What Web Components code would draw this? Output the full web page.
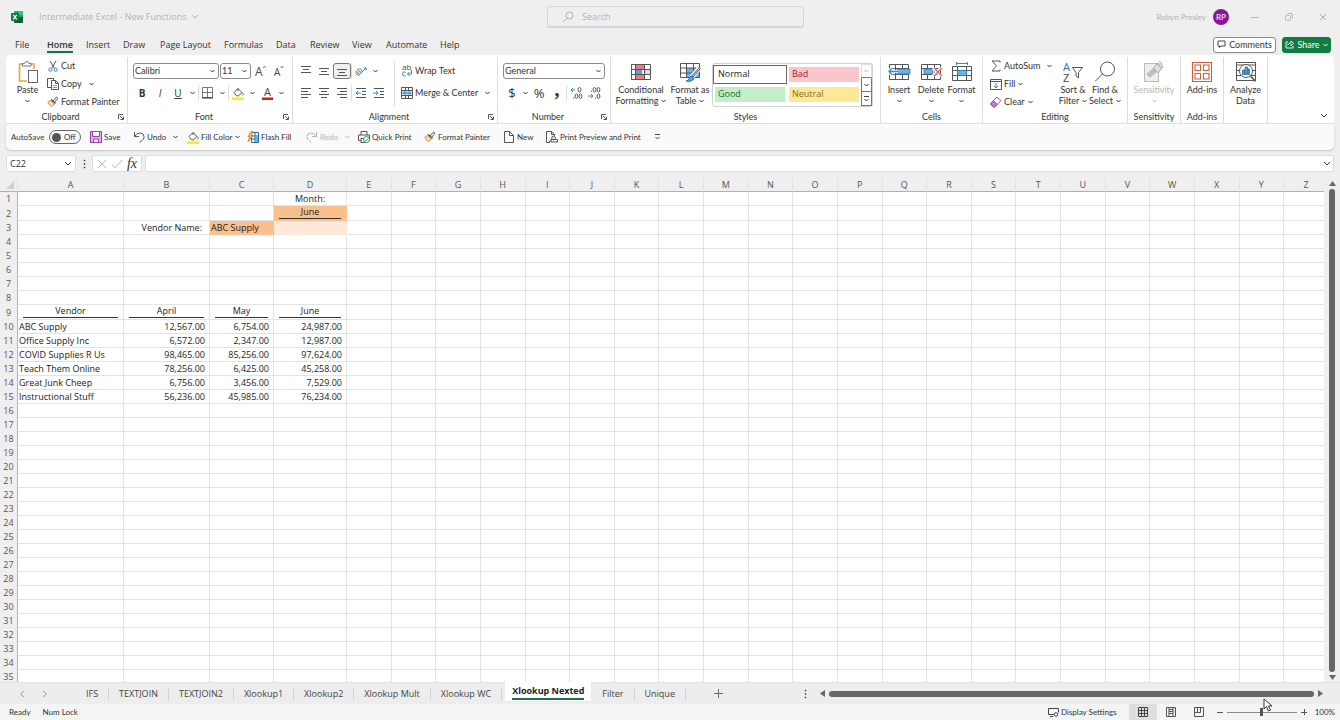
<!DOCTYPE html>
<html lang="en">
<head>
<meta charset="utf-8">
<title>Intermediate Excel - New Functions</title>
<style>
html,body{margin:0;height:100%}
body{font:9px/12px "Open Sans","Noto Sans",sans-serif;color:#333;background:#efefef;overflow:hidden;--compact:Lato,"Open Sans",sans-serif}
</style>
</head>
<body>
<xl-app></xl-app>
<script>
const base = `*{box-sizing:border-box}button,input,select{font:inherit;color:inherit;margin:0}button{background:none;border:0;padding:0}a{color:inherit;text-decoration:none}`;

function define(name, css, html) {
  const template = document.createElement('template');
  customElements.define(name, class extends HTMLElement {
    connectedCallback() {
      if (this.shadowRoot) return;
      const body = typeof html === 'function' ? html(this) : html;
      template.innerHTML = `<style>${base}${css}</style>${body}`;
      this.attachShadow({mode: 'open'}).append(template.content.cloneNode(true));
    }
  });
}

/* ---------- icons: [width, height, drawing] ---------- */
const g = '#555', b = '#2e8bc9';
const lines = (ys, xs) => `<path stroke="${g}" d="${ys.map((y, i) => `M${xs[i][0]} ${y}H${xs[i][1]}`).join('')}"/>`;
const painter = `<path d="M6 5l3.500-4 1.500 1.300-3.300 3.900" stroke="${g}" fill="#fff"/><path d="M4 3.500l4.500 4" stroke="${g}" stroke-width="1.600"/><path d="M3.500 4.500L.8 6.200 4 10.500l3.500-2.500z" fill="#fbe3bd" stroke="#e08a24"/>`;
const bucket = `<path d="M2 5.500L6 1.500l4 4-3.500 3.300H4.500zM6 1.500V4" stroke="${g}" fill="#fff"/><path d="M10.500 5.500q1.500 2 0 3" stroke="${b}"/><path d="M0 10.500h12v2.500H0z" fill="#fbf000"/>`;
const icons = {
  excel: [12,12,`<rect x="3" y="0" width="9" height="12" rx="1" fill="#21a366"/><path d="M7 0h4q1 0 1 1v3H7z" fill="#33c481"/><path d="M3 6h9v5q0 1-1 1H4q-1 0-1-1z" fill="#185c37"/><rect x="0" y="2" width="8" height="8" rx="1" fill="#107c41"/><path d="M2.300 3.800l3.400 4.500M5.700 3.800L2.300 8.300" stroke="#fff" stroke-width="1.200"/>`],
  caret: [5,4,`<path d="M.5 1l2 2 2-2" stroke="currentColor"/>`],
  chevron: [8,6,`<path d="M1 1l3 3 3-3" stroke="currentColor"/>`],
  left: [6,8,`<path d="M5 1L1.500 4 5 7" stroke="currentColor"/>`],
  right: [6,8,`<path d="M1 1l3.500 3L1 7" stroke="currentColor"/>`],
  search: [12,12,`<circle cx="7.500" cy="4.500" r="3.500" stroke="#b0b0b0"/><path d="M5 7L1 11" stroke="#b0b0b0"/>`],
  min: [8,8,`<path d="M0 4.500h8" stroke="#bbb"/>`],
  restore: [8,8,`<rect x=".5" y="2.500" width="5" height="5" rx="1" stroke="#bbb"/><path d="M2.500 1q0-.5.500-.5h3q1.500 0 1.500 1.500v3.500" stroke="#bbb"/>`],
  close: [8,8,`<path d="M1 1l6 6M7 1L1 7" stroke="#aaa"/>`],
  comment: [9,9,`<path d="M1 1h7v5H4L2.500 7.500V6H1z" stroke="#444"/>`],
  share: [9,9,`<path d="M3 2H1v6h7V6M2.500 5.500Q3 3 6 3V1l2.500 2.500L6 6V4.500" stroke="#fff" stroke-width=".9"/>`],
  paste: [20,22,`<path d="M4 3H1.500v17H9M13 3h3v5" stroke="#eaa63c" stroke-width="1.600"/><path d="M4.500 5V2.500h2Q7 .5 8.800.5t2.200 2h2V5z" fill="#fff" stroke="#777"/><rect x="10.500" y="9.500" width="9" height="12" fill="#fff" stroke="#666"/>`],
  cut: [10,12,`<path d="M2 1l4.500 7.500M8 1L3.500 8.500" stroke="#555"/><circle cx="2.400" cy="9.700" r="1.600" stroke="${b}"/><circle cx="7.600" cy="9.700" r="1.600" stroke="${b}"/>`],
  copy: [12,12,`<path d="M4 9.500H.5v-9h6V2M4.500 2.500h4l3 3v6h-7zM8.500 2.500v3h3" stroke="#555"/><path d="M6 7.500h4M6 9.500h4" stroke="#777" stroke-width=".8"/>`],
  painter: [12,12,painter],
  launcher: [6,6,`<path d="M.5 5V.5H5M2 2l3 3M5.500 2.500v3h-3" stroke="#555"/>`],
  grow: [11,12,`<path d="M8 3l1.500-2L11 3" stroke="${b}" stroke-width=".9"/><text x="0" y="11" font-size="12" fill="#444">A</text>`],
  shrink: [11,12,`<path d="M7.500 1L9 3l1.500-2" stroke="${b}" stroke-width=".9"/><text x="1" y="11" font-size="10" fill="#444">A</text>`],
  borders: [12,12,`<path d="M.5.5h10v10H.5zM5.500.5v10M.5 5.500h10" stroke="#777"/><path d="M0 11h11" stroke="#333"/>`],
  bucket: [13,13,bucket],
  fontcolor: [11,13,`<text x="2" y="9" font-size="11" fill="#444">A</text><path d="M0 10.500h11v2.500H0z" fill="#e5121a"/>`],
  atop: [12,12,lines([1.5,4.5,7.5],[[1,11],[3,9],[1,11]])],
  amid: [12,12,lines([3.5,6.500,9.5],[[1,11],[3,9],[1,11]])],
  abot: [12,12,lines([4.5,7.5,10.5],[[1,11],[3,9],[1,11]])],
  aleft: [12,12,lines([1.5,4.5,7.5,10.5],[[1,11],[1,8],[1,11],[1,8]])],
  acen: [12,12,lines([1.5,4.5,7.5,10.5],[[1,11],[3,9],[1,11],[3,9]])],
  aright: [12,12,lines([1.5,4.5,7.5,10.5],[[1,11],[4,11],[1,11],[4,11]])],
  orient: [12,12,`<path d="M3 11l8-8M8.500 3H11v2.500" stroke="${b}"/><text x="-1" y="8" font-size="7" transform="rotate(-40 4 6)" fill="#444">ab</text>`],
  outdent: [12,12,lines([1.5,4.5,7.5,10.5],[[1,11],[7,11],[7,11],[1,11]])+`<path d="M6 6H1M3 4L1 6l2 2" stroke="${b}"/>`],
  indent: [12,12,lines([1.5,4.5,7.5,10.5],[[1,11],[7,11],[7,11],[1,11]])+`<path d="M0 6h5M3 4l2 2-2 2" stroke="${b}"/>`],
  wrap: [12,12,`<text x="1" y="5" font-size="8" fill="#444">ab</text><path d="M5 7.500Q4.500 7 3.500 7 1.500 7 1.500 9t2 2q1 0 1.500-.5" stroke="${b}"/><path d="M10.500 5v4H6.500M8.500 7l-2 2 2 2" stroke="${b}"/>`],
  merge: [12,12,`<rect x="1" y="3" width="10" height="6" fill="#bcdff5"/><path d="M.5.5h11v11H.5zM.5 3.500h11M.5 8.500h11M4.500.5v3M7.500.5v3M4.500 8.500v3M7.500 8.500v3" stroke="#555"/><path d="M2 6h8M4 4.500L2.500 6 4 7.500M8 4.500L9.500 6 8 7.500" stroke="#1c7cc0"/>`],
  decinc: [13,12,`<path d="M5 3H1M3 1L1 3l2 2" stroke="${b}"/><ellipse cx="9.500" cy="2.800" rx="1.500" ry="2.300" stroke="#555"/><ellipse cx="6.500" cy="9.200" rx="1.400" ry="2.300" stroke="#555"/><ellipse cx="10.500" cy="9.200" rx="1.400" ry="2.300" stroke="#555"/><path d="M3 11h1" stroke="#555"/>`],
  decdec: [13,12,`<path d="M0 9h5M3 7l2 2-2 2" stroke="${b}"/><ellipse cx="6.500" cy="2.800" rx="1.400" ry="2.300" stroke="#555"/><ellipse cx="10.500" cy="2.800" rx="1.400" ry="2.300" stroke="#555"/><ellipse cx="10.500" cy="9.200" rx="1.400" ry="2.300" stroke="#555"/><path d="M3 4.500h1M7 11h1" stroke="#555"/>`],
  cond: [20,18,`<rect x=".5" y="1.500" width="19" height="15" fill="#fff"/><path d="M4 2h9v4H4zM4 11h10v5H4z" fill="#f4777f"/><path d="M4 6h7v5H4z" fill="#4ea6dc"/><path d="M14 6h5v5h-5z" fill="#ddd"/><path d="M.5 1.500h19v15H.5zM4.500 1.500v15M13.500 1.500v15M.5 6.500h19M.5 11.500h19" stroke="#555"/>`],
  fmttable: [21,20,`<path d="M6 6h14v10H6z" fill="#69b4e5"/><path d="M.5 1.500h19v14H.5zM6.500 1.500v14M13.500 1.500v14M.5 6h19M.5 11h19" stroke="#555"/><path d="M19.500 6L11 16" stroke="#fff" stroke-width="5"/><path d="M20 6l-8 9" stroke="#555" stroke-width="2.400"/><path d="M20 6l-8 9" stroke="#fff" stroke-width=".8"/><path d="M12 14q-3 0-3 3-.5 1.500-3 2 5 1.500 8-2z" fill="#4ea6dc" stroke="#2576ad"/>`],
  insert: [22,18,`<path d="M1.500 1.500h19v15h-19zM1.500 5.500h19M1.500 11.500h19M7.500 1.500v15M14.500 1.500v15" stroke="#555"/><path d="M9 6h13v5H9z" fill="#69b4e5" stroke="#2e7cb5" stroke-width=".8"/><path d="M10 8.500H.5M4.500 4.500l-4 4 4 4" stroke="#fff" stroke-width="3"/><path d="M10 8.500H1M4.500 5L1 8.500 4.500 12" stroke="${b}" stroke-width="1.300"/>`],
  delete: [22,18,`<path d="M1.500 1.500h19v15h-19zM1.500 5.500h19M1.500 11.500h19M7.500 1.500v15M14.500 1.500v15" stroke="#555"/><path d="M4 6h9v5H4z" fill="#69b4e5" stroke="#2e7cb5" stroke-width=".8"/><path d="M13 5l8 8M21 5l-8 8" stroke="#fff" stroke-width="3"/><path d="M14 5l8 8M22 5l-8 8" stroke="#e05a63" stroke-width="1.200"/>`],
  format: [22,20,`<path d="M5.500 0v3M16.500 0v3M5.500 1.500h11" stroke="${b}"/><path d="M1.500 4.500h19v14h-19zM1.500 8.500h19M1.500 13.500h19M6.500 4.500v14M15.500 4.500v14" stroke="#555"/><path d="M6.500 8.500h9v5h-9z" fill="#69b4e5" stroke="#2e7cb5"/>`],
  sum: [10,12,`<path d="M9 2.500V1H1l4.500 4.800L1 11h8V9.500" stroke="#555"/>`],
  fill: [12,11,`<path d="M.5.5h11v10H.5zM.5 2.500h11" stroke="#555"/><path d="M6 4v5M4 7l2 2 2-2" stroke="${b}"/>`],
  clear: [12,12,`<path d="M1 7l6-6 4 3.500-6 6.500H3.500L1 8.500z" stroke="#a14fb3" fill="#fff"/><path d="M1 7l2.500-2.500L7.500 8.500 5 11H3.500L1 8.500z" fill="#c07fd0" stroke="#a14fb3"/>`],
  sort: [20,22,`<text x="0" y="10" font-size="11" fill="#2378b5">A</text><text x="0" y="21" font-size="11" fill="#444">Z</text><path d="M9.500 6.500h10l-4 5V17l-2.500-2v-3.500z" stroke="#555"/>`],
  find: [22,22,`<circle cx="13.500" cy="8" r="7" stroke="#555"/><path d="M8.500 13L1 20.500" stroke="#555"/>`],
  sens: [20,22,`<rect x=".5" y="2.500" width="14" height="18" fill="#eee" stroke="#bbb"/><path d="M3 13l6-5 3 3-6 5z" fill="#ccc" stroke="#aaa"/><path d="M9 7l5-5 5 4-5 6z" fill="#ddd" stroke="#aaa"/><path d="M12 2l6 6M15 0l4 4M5 14l5-4" stroke="#aaa"/>`],
  addins: [20,20,`<path d="M.5.5h19v19H.5zM3 3h5.500v5.500H3zM11.500 3H17v5.500h-5.500zM3 11.500h5.500V17H3zM11.500 11.500H17V17h-5.500z" stroke="#c5603c" stroke-width="1.100"/>`],
  analyze: [20,20,`<path d="M.5.5h19v18H.5zM.5 3h19M.5 8.500h19M.5 13.500h19" stroke="#555"/><circle cx="10" cy="9" r="6.500" fill="#fff" stroke="#555"/><path d="M6.500 8h2v4.500h-2zM9 5h2.500v7.500H9zM12 7h1.500v5.500H12z" fill="#4ea6dc" stroke="#225d88" stroke-width=".7"/><path d="M14.500 14l5 5.500" stroke="#555" stroke-width="1.500"/>`],
  save: [12,12,`<path d="M.5.5h11v11h-11z" fill="#e3b5e8" stroke="#9b3fa8"/><path d="M2.500.5h7v5h-7zM3.500 8h5v3.500h-5z" fill="#fff" stroke="#9b3fa8"/>`],
  undo: [12,12,`<path d="M1.500 1v4.500H6M1.500 5.500Q4 1.500 7.500 2T11 5.500 9.500 9L6.500 11.500" stroke="#555"/>`],
  redo: [12,12,`<path d="M10.500 1v4.500H6M10.500 5.500Q8 1.500 4.500 2T1 5.500 2.500 9L5.500 11.500" stroke="#b5b5b5"/>`],
  flash: [12,12,`<path d="M4.500 1.500h7v10h-7zM8 1.500v10M4.500 5h7M4.500 8h7" stroke="#1c6ca5"/><path d="M8.500 5.500h2.500V11H8.500z" fill="#69b4e5"/><path d="M4 .5L1 5.500h2L.8 11 6 4.500H4L6 .5z" fill="#f7c46c" stroke="#d17718" stroke-width=".8"/>`],
  quick: [12,12,`<path d="M3 4V.5h6V4M3 9.500H.5V4h11v5.500H9M3 7.500h5.500v4H3z" stroke="#555"/><circle cx="8.500" cy="8.500" r="3" fill="#fff" stroke="#2d9a54"/><path d="M7 8.500l1.200 1.200L10 7.500" stroke="#2d9a54"/>`],
  page: [10,12,`<path d="M.5.5h5l4 4v7h-9zM5.500.5v4h4" stroke="#555"/>`],
  preview: [12,12,`<path d="M4 11.500H.5V.5h5l3 3V5M5.500.5v3h3" stroke="#555"/><circle cx="7.500" cy="7" r="1.800" stroke="#555"/><path d="M5 8.500h6.500V11H5zM3 11l2-2" stroke="#555"/>`],
  more: [7,6,`<path d="M1 .5h5M1.500 3l2 2 2-2" stroke="#444"/>`],
  dots: [3,10,`<path d="M1 1h1v1H1zM1 4.500h1v1H1zM1 8h1v1H1z" fill="#444" stroke="#444" stroke-width=".6"/>`],
  cancel: [10,10,`<path d="M1 1l8 8M9 1L1 9" stroke="#bbb"/>`],
  check: [12,10,`<path d="M1 5.500L4 9l7-8" stroke="#bbb"/>`],
  plus: [9,9,`<path d="M4.500 0v9M0 4.500h9" stroke="#666"/>`],
  display: [11,9,`<path d="M6 6.500H.5v-6h10v4M2 8.500h3" stroke="#444"/><circle cx="8" cy="6.500" r="1.800" stroke="#444"/>`],
  normal: [10,10,`<path d="M.5.5h9v9h-9zM3.500.5v9M6.500.5v9M.5 3.500h9M.5 6.500h9" stroke="#444"/>`],
  layout: [10,10,`<path d="M.5.5h9v9h-9zM3 .5v9M7 .5v9M3 2.500h4M3 4.500h4M3 6.500h4" stroke="#555"/>`],
  breaks: [10,10,`<path d="M.5.5h9v9h-9zM3.500.5v5h3v-5M.5 5.500h3" stroke="#555"/>`],
  minus: [6,6,`<path d="M0 3.500h6" stroke="#555"/>`],
  plussm: [6,6,`<path d="M0 3.500h6M3.500 0v6" stroke="#555"/>`],
  triup: [7,5,`<path d="M0 5L3.500 0 7 5z" fill="#666"/>`],
  tridown: [7,5,`<path d="M0 0h7L3.500 5z" fill="#666"/>`],
  trileft: [5,7,`<path d="M5 0v7L0 3.500z" fill="#666"/>`],
  triright: [5,7,`<path d="M0 0v7l5-3.500z" fill="#666"/>`],
  pointer: [10,14,`<path d="M1 1v10l2.500-2.500L5.500 13l2-1L5.500 8H9z" fill="#fff" stroke="#333"/>`]
};
define('xl-icon', `:host{display:block;flex:none;line-height:0}svg{display:block;overflow:visible;font-family:"Open Sans",sans-serif}`,
  el => { const [w,h,d] = icons[el.getAttribute('name')]; return `<svg width="${w}" height="${h}" viewBox="0 0 ${w} ${h}" fill="none" aria-hidden="true">${d}</svg>`; });

/* small command: icon, text and optional drop-down arrow in one line */
define('xl-command', `:host{display:block}button{display:flex;align-items:center;height:16px;gap:2px;white-space:nowrap}
  .pic{width:12px;display:flex;justify-content:center}.arrow{margin-left:var(--caret-gap,1px)}`,
  el => `<button type="button"><span class="pic"><xl-icon name="${el.getAttribute('icon')}"></xl-icon></span><slot></slot>${el.hasAttribute('caret') ? '<xl-icon class="arrow" name="caret"></xl-icon>' : ''}</button>`);

/* tall command: picture above one or two lines of text */
define('xl-tall', `:host{display:block;line-height:11px;width:var(--w,31px);flex:none}
  button{width:100%;display:flex;flex-direction:column;align-items:center;white-space:nowrap;padding-top:2px}
  .pic{height:25px;display:flex;align-items:center}.second{display:flex;align-items:center;gap:3px;height:11px}`,
  el => `<button type="button"><span class="pic"><xl-icon name="${el.getAttribute('icon')}"></xl-icon></span><slot></slot><span class="second">${el.getAttribute('second') || ''}${el.hasAttribute('caret') ? '<xl-icon name="caret"></xl-icon>' : ''}</span></button>`);

/* icon-only tool */
define('xl-tool', `:host{display:block;width:var(--w,18px);flex:none}button{width:100%;height:16px;display:flex;align-items:center;justify-content:center;font-size:10px}
  :host([on]) button{border:1px solid #777;border-radius:3px;background:#f0f0f0}`,
  el => `<button type="button" aria-label="${el.title}">${el.getAttribute('icon') ? `<xl-icon name="${el.getAttribute('icon')}"></xl-icon>` : '<slot></slot>'}</button>`);

define('xl-select', `:host{display:flex;position:relative;width:var(--w)}select{appearance:none;width:100%;height:16px;border:1px solid #8a8a8a;border-radius:3px;background:#fff;padding:0 0 0 1px;outline:0}
  xl-icon{position:absolute;right:4px;top:6px;pointer-events:none}`,
  el => `<select aria-label="${el.getAttribute('label')}"><option>${el.getAttribute('value')}</option></select><xl-icon name="caret"></xl-icon>`);

define('xl-group', `:host{display:flex;flex-direction:column;border-right:1px solid #dcdcdc;width:var(--group);flex:none;margin-top:2px;height:66px}
  .body{display:flex;flex:1;min-height:0}.foot{display:flex;align-items:center;height:12px}
  .foot span{flex:1;text-align:center}.foot button{width:12px;display:flex;justify-content:center}`,
  el => `<div class="body"><slot></slot></div><div class="foot"><span>${el.getAttribute('label') || ''}</span>${el.hasAttribute('launch') ? '<button type="button" aria-label="More options"><xl-icon name="launcher"></xl-icon></button>' : ''}</div>`);

define('xl-titlebar', `:host{display:grid;grid-template-columns:1fr 257px 1fr;align-items:center;height:34px;padding-left:11px;color:#b3b3b3}
  .left,.right{display:flex;align-items:center}.left{gap:4px}.left xl-icon:first-child{margin-right:12px}
  .search{display:flex;align-items:center;gap:8px;height:22px;border:1px solid #d6d6d6;border-bottom-width:2px;border-radius:3px;padding-left:14px}
  .search input{border:0;background:none;flex:1;min-width:0;outline:0;padding:0}.search input::placeholder{color:#b3b3b3;opacity:1}
  .right{justify-content:flex-end;font-family:var(--compact);font-size:8px;padding-right:13px}.avatar{width:16px;height:16px;line-height:16px;border-radius:50%;background:#881798;color:#fff;text-align:center;margin:0 22px 0 7px}
  .right button{margin-left:26px}.right .avatar+button{margin-left:0}`,
  `<div class="left"><xl-icon name="excel"></xl-icon><span>Intermediate Excel - New Functions</span><xl-icon name="chevron"></xl-icon></div>
  <label class="search"><xl-icon name="search"></xl-icon><input type="search" placeholder="Search" aria-label="Search"></label>
  <div class="right"><span>Robyn Presley</span><span class="avatar">RP</span><button type="button" aria-label="Minimize"><xl-icon name="min"></xl-icon></button><button type="button" aria-label="Restore"><xl-icon name="restore"></xl-icon></button><button type="button" aria-label="Close"><xl-icon name="close"></xl-icon></button></div>`);

define('xl-menubar', `:host{display:flex;justify-content:space-between;align-items:center;height:21px;padding:0 9px 0 15px}
  nav{display:grid;grid-template-columns:32px 39px 37px 37px 64px 52px 34px 42px 34px 54px auto;white-space:nowrap}
  a{justify-self:start;height:16px;line-height:15px}.on{font-weight:600;border-bottom:2px solid #1e7145}
  .actions{display:flex;gap:6px;font-family:var(--compact)}.actions button{display:flex;align-items:center;justify-content:center;gap:3px;height:16px;border:1px solid #8a8a8a;border-radius:3px;background:#fff;width:63px}
  .actions .share{background:#107c41;border-color:#107c41;color:#fff;width:49px}`,
  `<nav>${['File','Home','Insert','Draw','Page Layout','Formulas','Data','Review','View','Automate','Help'].map(t => `<a href="#"${t === 'Home' ? ' class="on"' : ''}>${t}</a>`).join('')}</nav>
  <div class="actions"><button type="button"><xl-icon name="comment"></xl-icon>Comments</button><button type="button" class="share"><xl-icon name="share"></xl-icon>Share<xl-icon name="caret"></xl-icon></button></div>`);

define('xl-gallery', `:host{display:grid;grid-template-columns:1fr 11px;width:161px;height:44px;border:1px solid #d0d0d0;border-radius:3px;margin:6px 0 0 3px;font-family:"Open Sans",sans-serif}
  .styles{display:grid;grid-template-columns:74px 70px;grid-template-rows:20px 20px;column-gap:2px;align-items:center}
  .styles button{height:15px;font-size:9px;line-height:14px;text-align:left;padding-left:3px}
  .styles .normal{height:19px;border:1px solid #666;padding-left:4px;color:#222}.bad{background:#fbc5cd;color:#a3202f}.good{background:#c3eec8;color:#27692e;margin:0 2px}.neutral{background:#fae995;color:#93691a}
  .scroll{display:grid;grid-template-rows:repeat(3,1fr)}.scroll button{display:flex;align-items:center;justify-content:center;border:1px solid #777}.scroll button+button{border-top-width:0}.scroll button:first-child{border-color:#ddd #ddd #777;color:#bbb}.scroll button:first-child xl-icon{rotate:180deg}`,
  `<div class="styles"><button type="button" class="normal">Normal</button><button type="button" class="bad">Bad</button><button type="button" class="good">Good</button><button type="button" class="neutral">Neutral</button></div>
  <div class="scroll"><button type="button" aria-label="Up"><xl-icon name="caret"></xl-icon></button><button type="button" aria-label="Down"><xl-icon name="caret"></xl-icon></button><button type="button" aria-label="More"><xl-icon name="more"></xl-icon></button></div>`);

define('xl-ribbon', `:host{display:flex;height:69px;background:#fff;border-radius:5px 5px 0 0;border-bottom:1px solid #e0e0e0;font-family:var(--compact)}
  .col{display:flex;flex-direction:column}.three{gap:2px}.two{gap:6px;padding-top:6px}.row{display:flex;align-items:center;height:16px}
  .vr{width:1px;height:16px;background:#ddd;flex:none}.vr.tall{height:44px;margin-top:5px}
  .three{padding-top:1px}xl-select+xl-select{margin-left:1px}.dim{color:#b5b5b5}
  .collapse{margin-left:auto;align-self:flex-end;padding:0 6px 4px 0}b,i,u{font-size:10px;font-family:"Open Sans",sans-serif}
  .cur{font:13px/16px "Open Sans",sans-serif}b.cur{font:700 20px/8px "Liberation Serif",serif;padding-bottom:8px}`,
  `<xl-group label="Clipboard" launch style="--group:122px"><xl-tall icon="paste" caret style="--w:39px;margin-left:2px">Paste</xl-tall>
    <div class="col three"><xl-command icon="cut">Cut</xl-command><xl-command icon="copy" caret style="--caret-gap:5px">Copy</xl-command><xl-command icon="painter">Format Painter</xl-command></div></xl-group>
  <xl-group label="Font" launch style="--group:165px"><div class="col two" style="padding-left:5px">
    <div class="row"><xl-select label="Font" value="Calibri" style="--w:86px"></xl-select><xl-select label="Font size" value="11" style="--w:31px"></xl-select><xl-tool icon="grow" title="Increase font size"></xl-tool><xl-tool icon="shrink" title="Decrease font size"></xl-tool></div>
    <div class="row"><xl-tool title="Bold"><b>B</b></xl-tool><xl-tool title="Italic"><i>I</i></xl-tool><xl-tool title="Underline"><u>U</u></xl-tool><xl-tool icon="caret" title="Underline options" style="--w:11px"></xl-tool><span class="vr"></span><xl-tool icon="borders" title="Borders"></xl-tool><xl-tool icon="caret" title="Border options" style="--w:11px"></xl-tool><span class="vr"></span><xl-tool icon="bucket" title="Fill color"></xl-tool><xl-tool icon="caret" title="Fill options" style="--w:11px"></xl-tool><xl-tool icon="fontcolor" title="Font color"></xl-tool><xl-tool icon="caret" title="Font color options" style="--w:11px"></xl-tool></div></div></xl-group>
  <xl-group label="Alignment" launch style="--group:205px"><div class="col two" style="padding-left:4px;width:101px">
    <div class="row"><xl-tool icon="atop" title="Top align"></xl-tool><xl-tool icon="amid" title="Middle align"></xl-tool><xl-tool icon="abot" on title="Bottom align"></xl-tool><span class="vr"></span><xl-tool icon="orient" title="Orientation"></xl-tool><xl-tool icon="caret" title="Orientation options" style="--w:11px"></xl-tool></div>
    <div class="row"><xl-tool icon="aleft" title="Align left"></xl-tool><xl-tool icon="acen" title="Center"></xl-tool><xl-tool icon="aright" title="Align right"></xl-tool><span class="vr"></span><xl-tool icon="outdent" title="Decrease indent"></xl-tool><xl-tool icon="indent" title="Increase indent"></xl-tool></div></div>
    <span class="vr tall"></span><div class="col two" style="padding-left:6px"><xl-command icon="wrap">Wrap Text</xl-command><xl-command icon="merge" caret style="--caret-gap:5px">Merge &amp; Center</xl-command></div></xl-group>
  <xl-group label="Number" launch style="--group:113px"><div class="col two" style="padding-left:5px"><div class="row"><xl-select label="Number format" value="General" style="--w:102px"></xl-select></div>
    <div class="row"><xl-tool title="Currency"><span class="cur">$</span></xl-tool><xl-tool icon="caret" title="Currency options" style="--w:9px"></xl-tool><xl-tool title="Percent"><span class="cur">%</span></xl-tool><xl-tool title="Comma style"><b class="cur">,</b></xl-tool><span class="vr"></span><xl-tool icon="decinc" title="Increase decimal"></xl-tool><xl-tool icon="decdec" title="Decrease decimal"></xl-tool></div></div></xl-group>
  <xl-group label="Styles" style="--group:270px"><xl-tall icon="cond" second="Formatting" caret style="--w:60px">Conditional</xl-tall><xl-tall icon="fmttable" second="Table" caret style="--w:38px">Format as</xl-tall><xl-gallery></xl-gallery></xl-group>
  <xl-group label="Cells" style="--group:102px"><xl-tall icon="insert" caret style="--w:36px">Insert</xl-tall><xl-tall icon="delete" caret style="--w:28px">Delete</xl-tall><xl-tall icon="format" caret style="--w:33px">Format</xl-tall></xl-group>
  <xl-group label="Editing" style="--group:145px"><div class="col three" style="padding-left:7px;width:74px"><xl-command icon="sum" caret style="--caret-gap:5px">AutoSum</xl-command><xl-command icon="fill" caret>Fill</xl-command><xl-command icon="clear" caret>Clear</xl-command></div><xl-tall icon="sort" second="Filter" caret style="--w:32px">Sort &amp;</xl-tall><xl-tall icon="find" second="Select" caret style="--w:32px">Find &amp;</xl-tall></xl-group>
  <xl-group label="Sensitivity" style="--group:53px"><xl-tall class="dim" icon="sens" caret style="--w:52px">Sensitivity</xl-tall></xl-group>
  <xl-group label="Add-ins" style="--group:43px"><xl-tall icon="addins" style="--w:42px">Add-ins</xl-tall></xl-group>
  <xl-group style="--group:44px"><xl-tall icon="analyze" second="Data" style="--w:43px">Analyze</xl-tall></xl-group>
  <button type="button" class="collapse" aria-label="Collapse ribbon"><xl-icon name="chevron"></xl-icon></button>`);

define('xl-quickbar', `:host{display:grid;grid-template-columns:79px 43px 54px 60px 59px 52px 66px 79px 43px 108px auto;align-items:center;justify-content:start;height:26px;background:#fafafa;border-radius:0 0 5px 5px;box-shadow:0 1px 2px #c4c4c4;padding-left:5px;font-family:var(--compact);font-size:8px}
  label{display:flex;align-items:center;justify-content:space-between;padding-right:9px}.switch{display:flex;align-items:center;gap:3px;width:32px;height:14px;border:1px solid #666;border-radius:7px;padding-left:2px}
  .switch input{appearance:none;margin:0;width:9px;height:9px;border-radius:50%;background:#555}.dim{color:#b5b5b5}`,
  `<label>AutoSave<span class="switch"><input type="checkbox" aria-label="AutoSave">Off</span></label>
  <xl-command icon="save">Save</xl-command><xl-command icon="undo" caret style="--caret-gap:5px">Undo</xl-command><xl-command icon="bucket" caret>Fill Color</xl-command><xl-command icon="flash">Flash Fill</xl-command><xl-command class="dim" icon="redo" caret style="--caret-gap:5px">Redo</xl-command><xl-command icon="quick">Quick Print</xl-command><xl-command icon="painter">Format Painter</xl-command><xl-command icon="page">New</xl-command><xl-command icon="preview">Print Preview and Print</xl-command><button type="button" aria-label="Customize toolbar"><xl-icon name="more"></xl-icon></button>`);

define('xl-formulabar', `:host{display:flex;align-items:center;height:17px;margin:5px 6px 6px 6px}
  .box{display:flex;align-items:center;background:#fff;border:1px solid #ddd;border-radius:2px;height:17px}.box input{border:0;outline:0;background:none;padding:0;min-width:0;flex:1}
  .name{width:70px;padding:0 3px}.dots{width:16px;display:flex;justify-content:center}.fx{width:50px;justify-content:space-around;padding:0 2px}.fx i{font:italic 14px/14px "Liberation Serif",serif}
  .formula{flex:1;margin-left:3px;padding:0 2px 0 4px}`,
  `<div class="box name"><input type="text" value="C22" aria-label="Name box"><xl-icon name="chevron"></xl-icon></div><span class="dots"><xl-icon name="dots"></xl-icon></span>
  <div class="box fx"><button type="button" aria-label="Cancel"><xl-icon name="cancel"></xl-icon></button><button type="button" aria-label="Enter"><xl-icon name="check"></xl-icon></button><button type="button"><i>fx</i></button></div>
  <div class="box formula"><input type="text" aria-label="Formula"><xl-icon name="chevron"></xl-icon></div>`);

/* ---------- worksheet ---------- */
const cells = {
  D1:['Month:','c'], D2:['June','c line orange'], B3:['Vendor Name:','r name'], C3:['ABC Supply','orange'], D3:['','pale'],
  A9:['Vendor','c line'], B9:['April','c line'], C9:['May','c line'], D9:['June','c line']
};
[['ABC Supply','12,567.00','6,754.00','24,987.00'],['Office Supply Inc','6,572.00','2,347.00','12,987.00'],['COVID Supplies R Us','98,465.00','85,256.00','97,624.00'],['Teach Them Online','78,256.00','6,425.00','45,258.00'],['Great Junk Cheep','6,756.00','3,456.00','7,529.00'],['Instructional Stuff','56,236.00','45,985.00','76,234.00']]
  .forEach((row, i) => row.forEach((v, j) => cells['ABCD'[j] + (10 + i)] = [v, j ? 'r' : '']));
const letters = [...'ABCDEFGHIJKLMNOPQRSTUVWXYZ'];
const sheetRows = Array.from({length: 35}, (_, i) => i + 1).map(n =>
  `<tr${n === 2 || n === 9 ? ' class="high"' : ''}><th scope="row">${n}</th>${letters.map(l => { const c = cells[l + n]; return c ? `<td class="${c[1]}"><span>${c[0]}</span></td>` : '<td></td>'; }).join('')}</tr>`).join('');
define('xl-sheet', `:host{display:flex;flex:1;min-height:0}.view{flex:1;min-width:0;overflow:hidden}
  table{table-layout:fixed;border-collapse:separate;border-spacing:0;width:calc(100% + 5px);line-height:12px}
  th{font-weight:400;color:#555;padding:0;height:14px;border-right:1px solid #e0e0e0}thead th{border-bottom:1px solid #b0b0b0}tbody th{border-right-color:#b5b5b5}
  td{height:14px;padding:0 1px;background:#fff;border:solid #e3e3e3;border-width:0 1px 1px 0;color:#222;white-space:nowrap}
  .high td,.high th{height:15px}.c{text-align:center}.r{text-align:right;padding-right:4px}.name{padding-right:7px}
  .line{padding:0 5px;vertical-align:bottom}.line span{display:block;border-bottom:1px solid #333;margin-bottom:1px}
  .orange{background:#f9bf8c;border-color:#f9bf8c}.pale{background:#fce9da;border-color:#fce9da}
  .bar{width:16px;display:flex;flex-direction:column;align-items:center;padding:3px 0 2px;gap:3px}.bar div{width:6px;flex:1;border-radius:3px;background:#666}
  .corner{display:block;width:0;border:4px solid transparent;border-right-color:#d0d0d0;border-bottom-color:#d0d0d0;margin-left:6px}`,
  `<div class="view"><table><colgroup><col style="width:18px"><col style="width:106px"><col style="width:86px"><col style="width:64px"><col style="width:73px">${'<col>'.repeat(22)}</colgroup>
  <thead><tr><th scope="col" aria-label="Select all"><span class="corner"></span></th>${letters.map(l => `<th scope="col">${l}</th>`).join('')}</tr></thead><tbody>${sheetRows}</tbody></table></div>
  <div class="bar"><xl-icon name="triup"></xl-icon><div></div><xl-icon name="tridown"></xl-icon></div>`);

define('xl-tabs', `:host{display:flex;align-items:center;height:22px;background:#ededed;border-top:1px solid #e2e2e2;color:#444}
  .nav{display:flex;gap:17px;padding-left:19px;width:76px;color:#999}nav{display:flex;align-items:center;align-self:stretch}
  nav a{padding:0 10px;border-right:1px solid #d2d2d2}nav .on{align-self:flex-start;height:19px;background:#fff;font-weight:700;color:#222;padding:2px 7px 0;margin:-1px 1px 0 3px;border:0;border-radius:0 0 3px 3px}.on span{display:block;border-bottom:2px solid #1e7145;line-height:14px}
  .add{margin-left:28px}.dots{margin-left:auto}.track{display:flex;align-items:center;gap:4px;width:503px;margin:0 17px 0 13px}.track div{flex:1;height:6px;border-radius:3px;background:#666}`,
  `<div class="nav"><button type="button" aria-label="Previous sheet"><xl-icon name="left"></xl-icon></button><button type="button" aria-label="Next sheet"><xl-icon name="right"></xl-icon></button></div>
  <nav>${['IFS','TEXTJOIN','TEXTJOIN2','Xlookup1','Xlookup2','Xlookup Mult','Xlookup WC','Xlookup Nexted','Filter','Unique'].map(t => `<a href="#"${t === 'Xlookup Nexted' ? ' class="on"' : ''}><span>${t}</span></a>`).join('')}</nav>
  <button type="button" class="add" aria-label="New sheet"><xl-icon name="plus"></xl-icon></button><xl-icon class="dots" name="dots"></xl-icon>
  <div class="track"><xl-icon name="trileft"></xl-icon><div></div><xl-icon name="triright"></xl-icon></div>`);

define('xl-statusbar', `:host{display:flex;align-items:center;height:16px;background:#f4f4f4;font-family:var(--compact);font-size:8px;padding:0 5px 0 9px;gap:12px}
  .display{display:flex;align-items:center;gap:2px;margin-left:auto}.views{display:flex}.views button{width:28px;height:16px;display:flex;align-items:center;justify-content:center}.views .on{background:#dedede}
  .zoom{display:flex;align-items:center;gap:4px;margin:0 -4px 0 -8px}.zoom input{appearance:none;width:70px;height:8px;background:linear-gradient(#888,#888) center/100% 1px no-repeat}.zoom input::-webkit-slider-thumb{appearance:none;width:3px;height:8px;background:#555}`,
  `<span>Ready</span><span>Num Lock</span><button type="button" class="display"><xl-icon name="display"></xl-icon>Display Settings</button>
  <div class="views"><button type="button" class="on" aria-label="Normal view"><xl-icon name="normal"></xl-icon></button><button type="button" aria-label="Page layout"><xl-icon name="layout"></xl-icon></button><button type="button" aria-label="Page breaks"><xl-icon name="breaks"></xl-icon></button></div>
  <div class="zoom"><button type="button" aria-label="Zoom out"><xl-icon name="minus"></xl-icon></button><input type="range" min="0" max="200" value="100" aria-label="Zoom"><button type="button" aria-label="Zoom in"><xl-icon name="plussm"></xl-icon></button></div><span>100%</span>`);

define('xl-app', `:host{display:flex;flex-direction:column;height:100vh;position:relative}.tools{margin:0 6px}
  .cursor{position:absolute;right:67px;bottom:8px}`,
  `<xl-titlebar></xl-titlebar><xl-menubar></xl-menubar><div class="tools"><xl-ribbon></xl-ribbon><xl-quickbar></xl-quickbar></div><xl-formulabar></xl-formulabar><xl-sheet></xl-sheet><xl-tabs></xl-tabs><xl-statusbar></xl-statusbar><xl-icon class="cursor" name="pointer"></xl-icon>`);
</script>
</body>
</html>
